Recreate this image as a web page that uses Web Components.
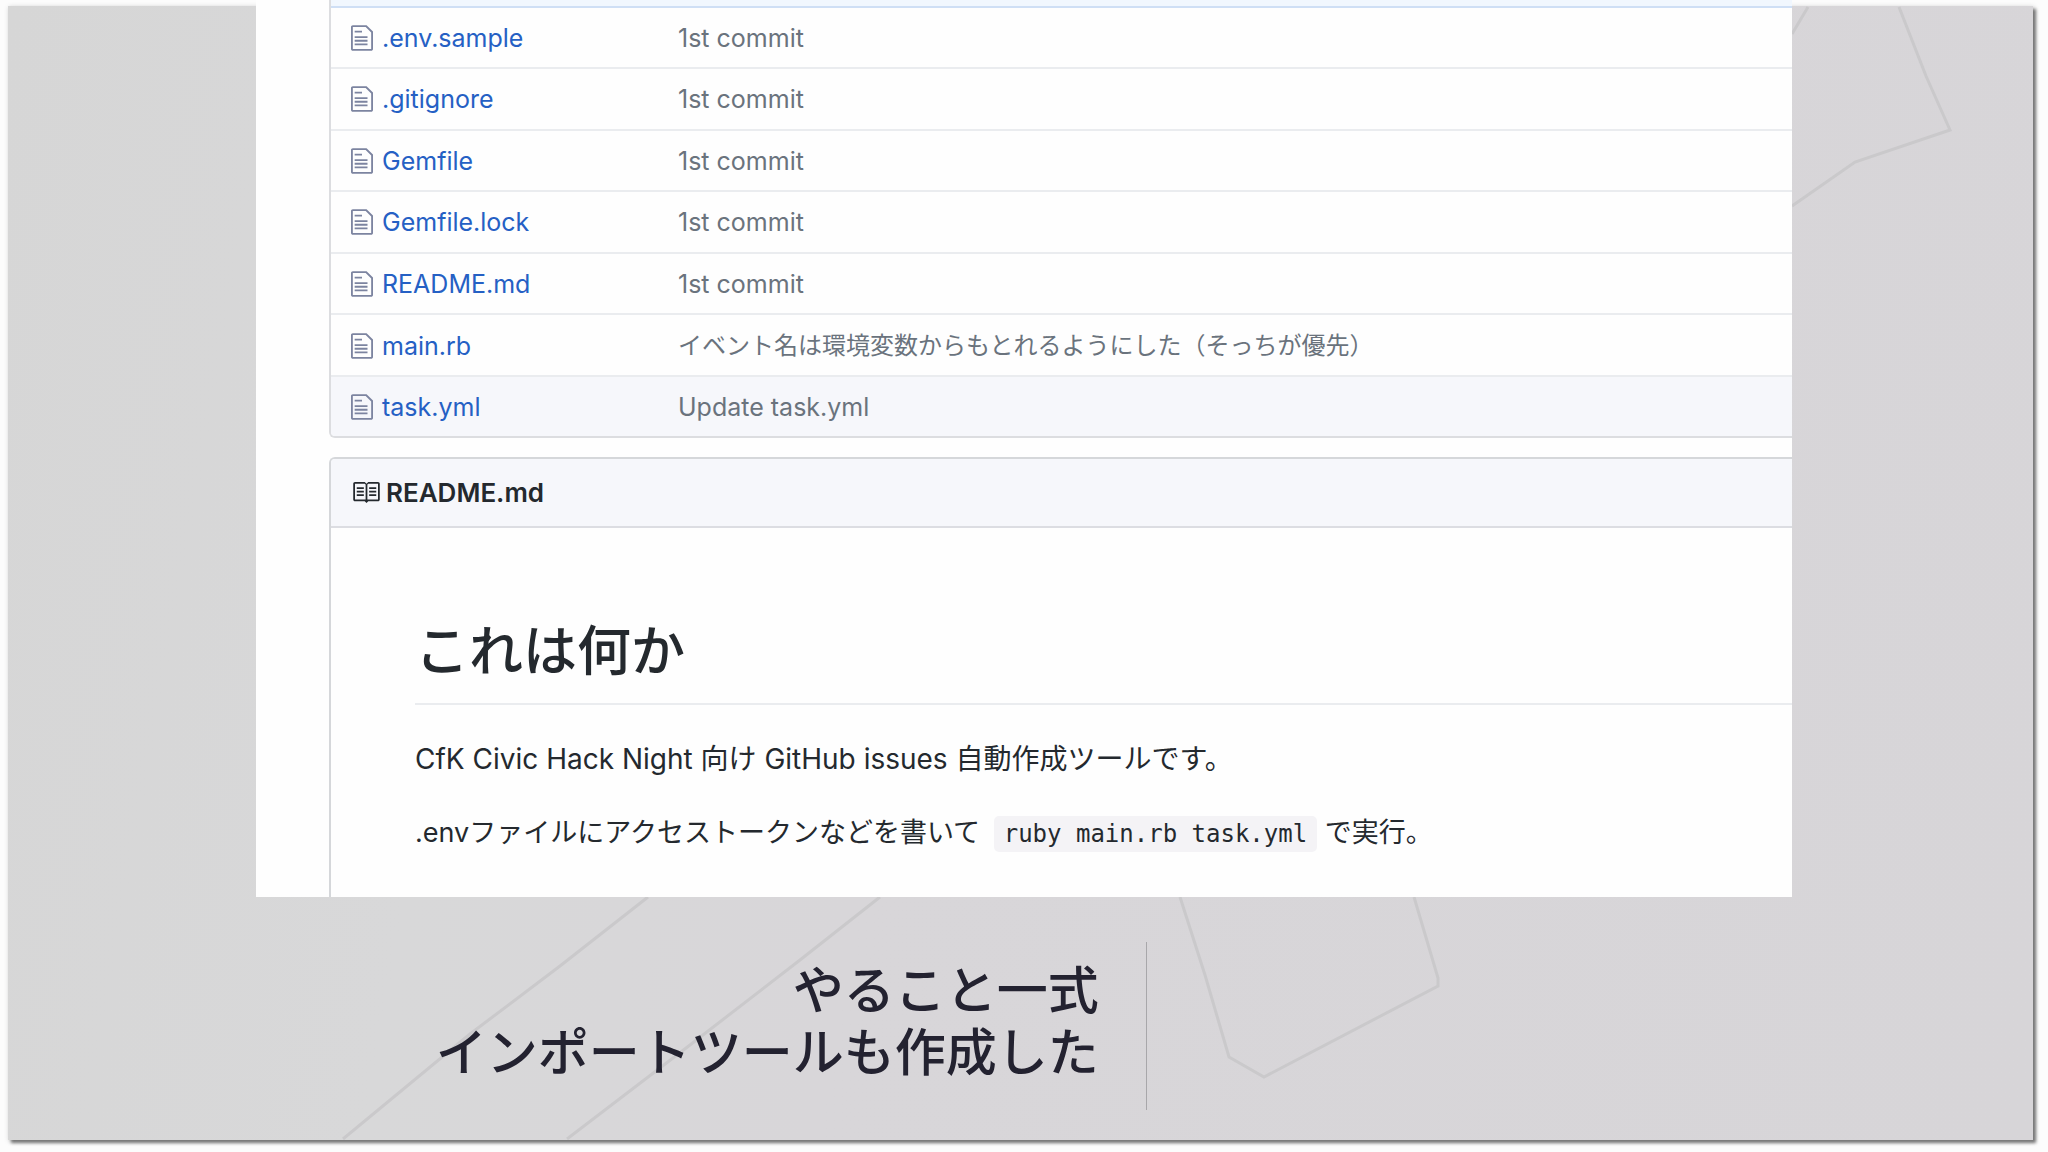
<!DOCTYPE html>
<html lang="ja">
<head>
<meta charset="utf-8">
<title>やること一式 インポートツールも作成した</title>
<style>
  body {
    margin: 0;
    background: #fcfcfc;
    font-family: Inter, "Noto Sans CJK JP", sans-serif;
    color: #24292e;
  }
</style>
</head>
<body>
<slide-frame>
  <repo-shot>
    <file-list></file-list>
    <readme-box name="README.md">
      <h1>これは何か</h1>
      <p>CfK Civic Hack Night 向け GitHub issues 自動作成ツールです。</p>
      <p lang="ja">.envファイルにアクセストークンなどを書いて <code>ruby main.rb task.yml</code> で実行。</p>
    </readme-box>
  </repo-shot>
  <slide-caption>やること一式<br>インポートツールも作成した</slide-caption>
</slide-frame>

<script>
const files = [
  { name: '.env.sample', message: '1st commit' },
  { name: '.gitignore', message: '1st commit' },
  { name: 'Gemfile', message: '1st commit' },
  { name: 'Gemfile.lock', message: '1st commit' },
  { name: 'README.md', message: '1st commit' },
  { name: 'main.rb', message: 'イベント名は環境変数からもとれるようにした（そっちが優先）', lang: 'ja' },
  { name: 'task.yml', message: 'Update task.yml', active: true },
];

/** Attaches an open shadow root filled with the given markup. */
function render(element, html) {
  const template = document.createElement('template');
  template.innerHTML = html;
  element.attachShadow({ mode: 'open' }).appendChild(template.content.cloneNode(true));
}

// The slide itself: paper background with faint pencil lines
class SlideFrame extends HTMLElement {
  constructor() {
    super();
    render(this, `
<style>
  :host {
    display: block;
    padding: 0 15px 12px 8px;
  }
  .paper {
    position: relative;
    display: flow-root;
    margin-top: 6px;
    background: linear-gradient(100deg, #d6d6d6, #d8d8d9 25%, #d8d6d9 45%, #d7d5d8);
    box-shadow: 3px 3px 3px #777, 1px 1px 5px #ccc;
  }
  svg {
    position: absolute;
    inset: 0;
    width: 100%;
    height: 100%;
  }
  path {
    fill: none;
    stroke: #cac9cb;
    stroke-width: 3;
  }
  .content {
    position: relative;
    margin-top: -6px;
  }
</style>
<div class="paper">
  <svg viewBox="8 6 2025 1134" preserveAspectRatio="none" aria-hidden="true">
    <path d="M648 897 560 966 470 1034 343 1139" />
    <path d="M880 897 800 960 690 1045 567 1139" />
    <path d="M1180 897 1205 975 1229 1057 1264 1077 1438 986V978L1414 897" />
    <path d="M1808 7 1792 34" />
    <path d="M1899 7 1926 76 1950 130 1855 162 1792 206" />
  </svg>
  <div class="content"><slot></slot></div>
</div>
`);
  }
}

// Cropped view of the repository page
class RepoShot extends HTMLElement {
  constructor() {
    super();
    render(this, `
<style>
  :host {
    display: block;
    box-sizing: border-box;
    width: 75vw;
    margin-left: calc(12.5vw - 8px);
    padding-left: 73px;
    background: #fefefe;
    overflow: hidden;
  }
</style>
<slot></slot>
`);
  }
}

class FileList extends HTMLElement {
  constructor() {
    super();
    const rows = files.map(file => `
  <tr${file.active ? ' class="active"' : ''}>
    <td class="name">
      <div>
        <svg viewBox="0 0 12 14" aria-hidden="true"><path d="M6 5H2V4h4v1zM2 8h7V7H2v1zm0 2h7V9H2v1zm0 2h7v-1H2v1zm10-7.5V14c0 .55-.45 1-1 1H1c-.55 0-1-.45-1-1V2c0-.55.45-1 1-1h7.5L12 4.500zM11 5L8 2H1v12h10V5z" transform="translate(0 -1)" /></svg>
        <a href="#">${file.name}</a>
      </div>
    </td>
    <td lang="${file.lang || 'en'}">${file.message}</td>
  </tr>`).join('');

    render(this, `
<style>
  :host {
    display: block;
    border: solid #dcdde0;
    border-width: 0 0 2px 2px;
    border-bottom-left-radius: 6px;
    overflow: hidden;
  }
  .commit {
    height: 6px;
    background: #f1f7fe;
    border-bottom: 2px solid #cfdff5;
  }
  table {
    width: 100%;
    height: 428px;
    border-collapse: collapse;
    table-layout: fixed;
    font-size: 25px;
    line-height: 32px;
  }
  td {
    padding: 1px 0 0;
    color: #6a737d;
    white-space: nowrap;
  }
  td[lang="ja"] {
    font-size: 24px;
  }
  tr + tr td {
    border-top: 2px solid #eaecef;
  }
  .name {
    width: 347px;
  }
  .name div {
    display: flex;
    align-items: center;
    gap: 9px;
    padding-left: 20px;
  }
  .active td {
    background: #f6f7fb;
  }
  a {
    color: #2560c4;
    text-decoration: none;
  }
  svg {
    width: 22px;
    height: 26px;
    fill: #7c84a0;
  }
</style>
<div class="commit"></div>
<table>
  <tbody>${rows}
  </tbody>
</table>
`);
  }
}

class ReadmeBox extends HTMLElement {
  constructor() {
    super();
    render(this, `
<style>
  :host {
    display: block;
    margin-top: 19px;
    border: solid #d5d7da;
    border-width: 2px 0 0 2px;
    border-top-left-radius: 6px;
    overflow: hidden;
  }
  header {
    display: flex;
    align-items: center;
    gap: 5px;
    height: 67px;
    padding-left: 21px;
    background: #f6f7fb;
    border-bottom: 2px solid #dcdde2;
  }
  h3 {
    margin: 0;
    font-size: 26px;
    font-weight: 600;
  }
  svg {
    width: 29px;
    height: 23px;
    fill: #24292e;
  }
  article {
    padding: 90px 0 44px 84px;
    font-size: 28px;
    line-height: 40px;
  }
  ::slotted(h1) {
    margin: 0;
    padding-bottom: 17px;
    border-bottom: 2px solid #eaecef;
    font-size: 54px;
    font-weight: 500;
    line-height: 68px;
  }
  ::slotted(p) {
    margin: 34px 0 0;
  }
  /* mostly kana, which runs wider than the Latin text */
  ::slotted(p[lang="ja"]) {
    font-size: 27px;
  }
</style>
<header>
  <svg viewBox="0 0 16 13" aria-hidden="true"><path d="M3 5h4v1H3V5zm0 3h4V7H3v1zm0 2h4V9H3v1zm11-5h-4v1h4V5zm0 2h-4v1h4V7zm0 2h-4v1h4V9zm2-6v9c0 .55-.45 1-1 1H9.500l-1 1-1-1H2c-.55 0-1-.45-1-1V3c0-.55.45-1 1-1h5.500l1 1 1-1H15c.55 0 1 .45 1 1zm-8 .5L7.500 3H2v9h6V3.500zm7-.5H9.500l-.5.5V12h6V3z" transform="translate(-.5 -1.500)" /></svg>
  <h3>${this.getAttribute('name')}</h3>
</header>
<article><slot></slot></article>
`);
    // code sits inside a slotted paragraph, so it is styled inline
    this.querySelectorAll('code').forEach(code => {
      code.style.cssText = `
        margin-left: 6px;
        padding: 4px 10px;
        border-radius: 5px;
        background: #f4f3f6;
        font: 24px "DejaVu Sans Mono", monospace;
      `;
    });
  }
}

class SlideCaption extends HTMLElement {
  constructor() {
    super();
    render(this, `
<style>
  :host {
    display: block;
    width: calc(56vw - 8px);
    box-sizing: border-box;
    padding: 45px 0 30px;
    color: #232230;
  }
  div {
    padding: 18px 47px 26px 0;
    border-right: 1px solid #a8a7aa;
    font-size: 51px;
    font-weight: 500;
    line-height: 62px;
    text-align: right;
  }
</style>
<div><slot></slot></div>
`);
  }
}

window.customElements.define('slide-frame', SlideFrame);
window.customElements.define('repo-shot', RepoShot);
window.customElements.define('file-list', FileList);
window.customElements.define('readme-box', ReadmeBox);
window.customElements.define('slide-caption', SlideCaption);
</script>
</body>
</html>
